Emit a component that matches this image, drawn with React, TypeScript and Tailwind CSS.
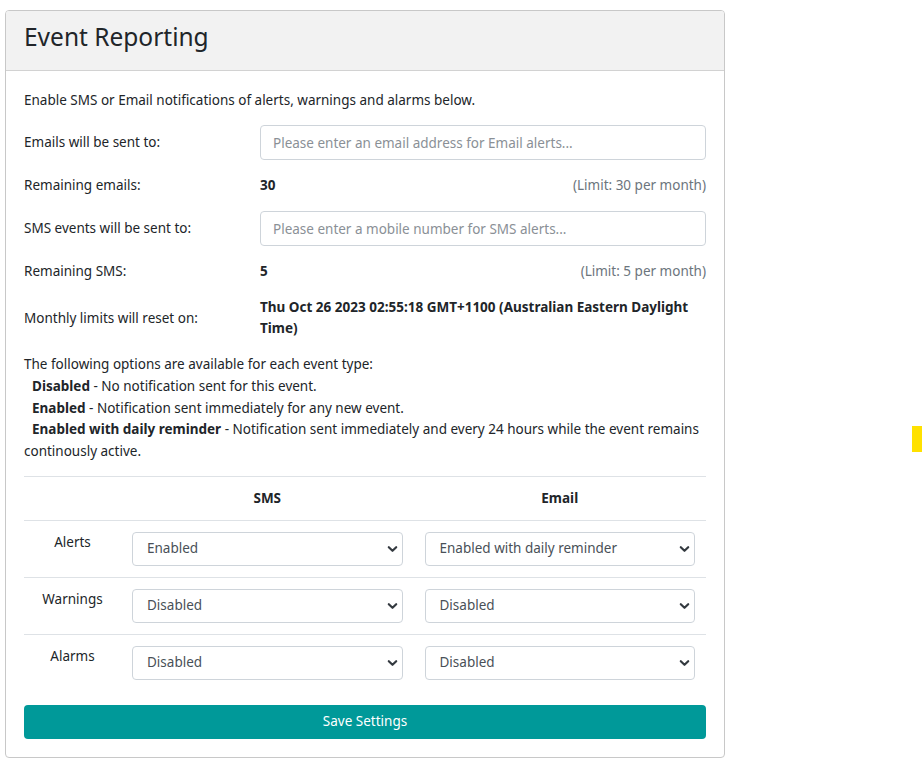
import React from "react";

const font = { fontFamily: '"Noto Sans", "Open Sans", sans-serif' };

function Chevron() {
  return (
    <svg
      className="pointer-events-none absolute right-[5px] top-1/2 -translate-y-1/2"
      width="11"
      height="8"
      viewBox="0 0 11 8"
    >
      <path
        d="M1.8 2.2l3.7 3.6 3.7-3.6"
        fill="none"
        stroke="#343a40"
        strokeWidth="2.2"
        strokeLinecap="round"
        strokeLinejoin="round"
      />
    </svg>
  );
}

function Select({ value }: { value: string }) {
  const options = ["Disabled", "Enabled", "Enabled with daily reminder"];
  return (
    <div className="relative w-full">
      <select
        defaultValue={value}
        className="w-full h-[34px] appearance-none bg-white border border-[#ced4da] rounded-[4px] pl-[14px] pr-8 text-[13.5px] text-[#495057] outline-none"
      >
        {options.map((o) => (
          <option key={o}>{o}</option>
        ))}
      </select>
      <Chevron />
    </div>
  );
}

export default function App() {
  const rows = [
    { label: "Alerts", sms: "Enabled", email: "Enabled with daily reminder" },
    { label: "Warnings", sms: "Disabled", email: "Disabled" },
    { label: "Alarms", sms: "Disabled", email: "Disabled" },
  ];

  return (
    <div className="relative w-[922px] min-h-[763px] bg-white text-[#212529]" style={font}>
      <div className="pt-[10px] pl-[5px]">
        <div className="w-[720px] border border-[#c8c8c8] rounded-[4px] overflow-hidden">
          {/* header */}
          <div className="h-[60px] bg-[#f2f2f2] border-b border-[#d2d2d2] flex items-center px-[18px] pb-[7px]">
            <h1 className="text-[24.5px] leading-none font-normal">Event Reporting</h1>
          </div>

          {/* body */}
          <div className="px-[18px] pt-[19px] pb-[18px] text-[13.5px] leading-[21px]">
            <p>Enable SMS or Email notifications of alerts, warnings and alarms below.</p>

            <div className="mt-[14px] flex flex-col gap-[15px]">
              <div className="grid grid-cols-[236px_1fr] items-center">
                <span>Emails will be sent to:</span>
                <input
                  type="text"
                  placeholder="Please enter an email address for Email alerts..."
                  className="h-[35px] border border-[#ced4da] rounded-[4px] px-[12px] text-[13.5px] placeholder:text-[#8a9096] outline-none"
                />
              </div>

              <div className="grid grid-cols-[236px_1fr] items-center">
                <span>Remaining emails:</span>
                <div className="flex justify-between">
                  <span className="font-bold">30</span>
                  <span className="text-[#6c757d]">(Limit: 30 per month)</span>
                </div>
              </div>

              <div className="grid grid-cols-[236px_1fr] items-center">
                <span>SMS events will be sent to:</span>
                <input
                  type="text"
                  placeholder="Please enter a mobile number for SMS alerts..."
                  className="h-[35px] border border-[#ced4da] rounded-[4px] px-[12px] text-[13.5px] placeholder:text-[#8a9096] outline-none"
                />
              </div>

              <div className="grid grid-cols-[236px_1fr] items-center">
                <span>Remaining SMS:</span>
                <div className="flex justify-between">
                  <span className="font-bold">5</span>
                  <span className="text-[#6c757d]">(Limit: 5 per month)</span>
                </div>
              </div>

              <div className="grid grid-cols-[236px_1fr] items-center">
                <span>Monthly limits will reset on:</span>
                <span className="font-bold">
                  Thu Oct 26 2023 02:55:18 GMT+1100 (Australian Eastern Daylight Time)
                </span>
              </div>

              <div className="leading-[21.75px]">
                <p>The following options are available for each event type:</p>
                <p className="indent-[8px]">
                  <b>Disabled</b> - No notification sent for this event.
                </p>
                <p className="indent-[8px]">
                  <b>Enabled</b> - Notification sent immediately for any new event.
                </p>
                <p className="indent-[8px]">
                  <b>Enabled with daily reminder</b> - Notification sent immediately and every 24
                  hours while the event remains continously active.
                </p>
              </div>
            </div>

            {/* table */}
            <div className="mt-[13px] border-t border-[#dee2e6]">
              <div className="grid grid-cols-[97px_1fr_1fr] h-[44px] items-center border-b border-[#dee2e6] font-bold text-center">
                <span />
                <span>SMS</span>
                <span>Email</span>
              </div>
              {rows.map((r, i) => (
                <div
                  key={r.label}
                  className={`grid grid-cols-[97px_1fr_1fr] ${i > 0 ? "border-t border-[#dee2e6]" : ""}`}
                >
                  <div className="pt-[11px] text-center">{r.label}</div>
                  <div className="p-[11px]">
                    <Select value={r.sms} />
                  </div>
                  <div className="p-[11px]">
                    <Select value={r.email} />
                  </div>
                </div>
              ))}
            </div>

            <button className="mt-[14px] w-full h-[34px] bg-[#009999] text-white text-[13.5px] rounded-[4px]">
              Save Settings
            </button>
          </div>
        </div>
      </div>

      <div className="absolute left-[912px] top-[426px] w-[10px] h-[26px] bg-[#ffe100]" />
    </div>
  );
}
